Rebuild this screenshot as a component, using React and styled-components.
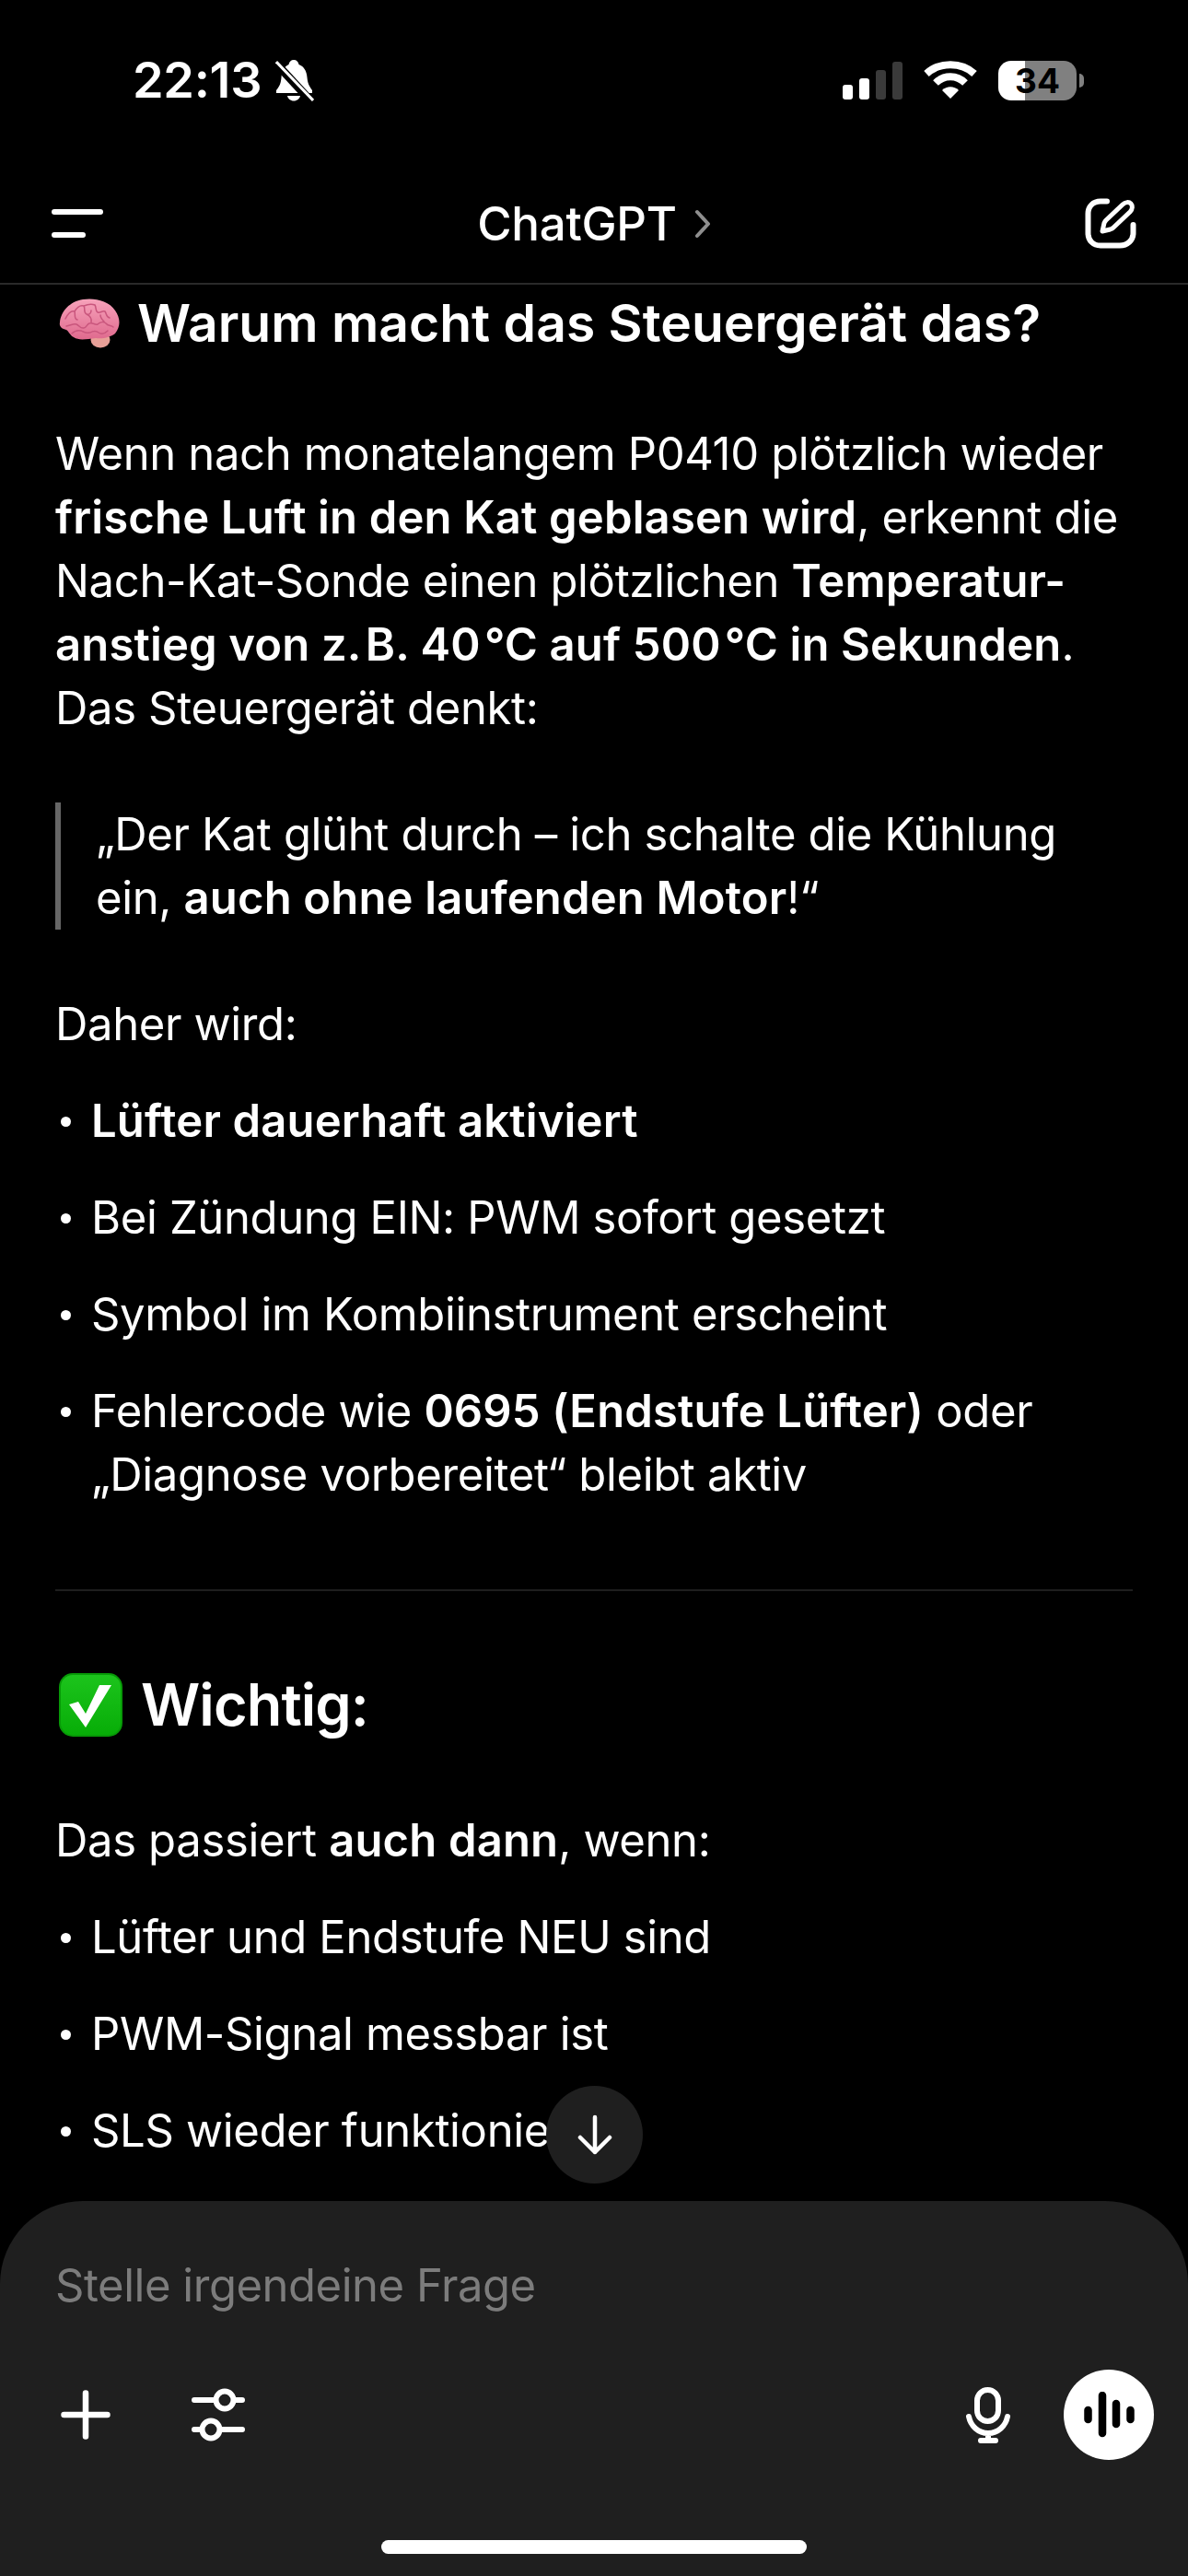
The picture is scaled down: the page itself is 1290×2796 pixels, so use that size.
import React from 'react';
import styled, {createGlobalStyle} from 'styled-components';

const GlobalStyle = createGlobalStyle`
  html, body {
    margin: 0;
    padding: 0;
    background: #000;
  }
  * {
    box-sizing: border-box;
  }
`;

const Screen = styled.div`
  position: relative;
  display: flex;
  flex-direction: column;
  width: 1290px;
  height: 2796px;
  overflow: hidden;
  background: #000;
  color: #fff;
  font-family: Inter, "Liberation Sans", sans-serif;
`;

const StatusBar = styled.div`
  display: flex;
  flex: none;
  justify-content: space-between;
  height: 178px;
  padding: 62px 113px 0 144px;
`;

const StatusLeft = styled.div`
  display: flex;
  align-items: center;
  gap: 15px;
  height: 50px;
`;

const Clock = styled.span`
  font-size: 54px;
  font-weight: 600;
  letter-spacing: -0.3px;
  line-height: 50px;
`;

const StatusRight = styled.div`
  display: flex;
  align-items: center;
  height: 50px;
`;

const Signal = styled.div`
  display: flex;
  align-items: flex-end;
  gap: 7px;
  height: 41px;
  margin-right: 23px;
`;

const SignalBar = styled.div`
  width: 11px;
  height: ${p => p.$h}px;
  border-radius: 3px;
  background: ${p => (p.$on ? '#fff' : '#3a3a3a')};
`;

const Battery = styled.div`
  display: flex;
  align-items: center;
  justify-content: center;
  width: 85px;
  height: 43px;
  margin-left: 23px;
  border-radius: 14px;
  background: linear-gradient(to right, #fff 0, #fff 29px, #808080 29px, #808080 100%);
  color: #000;
  font-size: 37px;
  font-weight: 700;
  line-height: 43px;
`;

const BatteryNub = styled.div`
  width: 5px;
  height: 15px;
  margin-left: 3px;
  border-radius: 0 5px 5px 0;
  background: #808080;
`;

const NavBar = styled.div`
  display: flex;
  flex: none;
  align-items: center;
  justify-content: space-between;
  height: 131px;
  padding: 0 56px 0 56px;
  border-bottom: 2px solid #2a2a2a;
`;

const MenuIcon = styled.div`
  display: flex;
  flex-direction: column;
  gap: 19px;
  width: 56px;
`;

const MenuLine = styled.div`
  width: ${p => p.$w}px;
  height: 6px;
  border-radius: 3px;
  background: #fff;
`;

const NavTitle = styled.div`
  display: flex;
  align-items: center;
  gap: 19px;
  font-size: 51px;
  font-weight: 500;
  letter-spacing: -0.3px;
`;

const Main = styled.div`
  flex: 1;
  min-height: 0;
  overflow: hidden;
  padding: 0 60px;
`;

const Heading = styled.div`
  display: flex;
  align-items: center;
  gap: ${p => p.$gap}px;
  height: 70px;
  margin-top: ${p => p.$top}px;
  padding-left: 4px;
  font-size: ${p => p.$size}px;
  font-weight: 600;
  letter-spacing: ${p => p.$ls}px;
  line-height: 70px;
  white-space: nowrap;
`;

const Para = styled.div`
  font-size: 49px;
  line-height: 69px;
  font-weight: 400;
  letter-spacing: -0.35px;
  white-space: nowrap;
  margin-top: ${p => p.$top}px;
  b {
    font-weight: 600;
    letter-spacing: 0.15px;
  }
`;

const Quote = styled(Para)`
  padding-left: 38px;
  border-left: 6px solid #666;
  margin-top: 68px;
`;

const List = styled.div`
  display: flex;
  flex-direction: column;
  gap: 36px;
  margin-top: 36px;
`;

const Item = styled(Para)`
  position: relative;
  padding-left: 39px;
  &::before {
    content: '';
    position: absolute;
    left: 6px;
    top: 30px;
    width: 11px;
    height: 11px;
    border-radius: 50%;
    background: #fff;
  }
`;

const Rule = styled.div`
  height: 2px;
  margin-top: 90px;
  background: #1e1e1e;
`;

const ScrollButton = styled.div`
  position: absolute;
  left: 593px;
  top: 2264px;
  display: flex;
  align-items: center;
  justify-content: center;
  width: 105px;
  height: 106px;
  border-radius: 50%;
  background: #1f1f1f;
`;

const Composer = styled.div`
  display: flex;
  flex: none;
  flex-direction: column;
  height: 407px;
  border-radius: 90px 90px 0 0;
  background: #1f1f1f;
`;

const Placeholder = styled.div`
  height: 69px;
  margin-top: 57px;
  padding-left: 60px;
  color: #7c7c7c;
  font-size: 49px;
  letter-spacing: -0.47px;
  line-height: 69px;
`;

const Toolbar = styled.div`
  display: flex;
  align-items: center;
  justify-content: space-between;
  height: 98px;
  margin-top: 57px;
  padding: 0 37px 0 66px;
`;

const ToolGroup = styled.div`
  display: flex;
  align-items: center;
  gap: ${p => p.$gap}px;
`;

const VoiceButton = styled.div`
  display: flex;
  align-items: center;
  justify-content: center;
  width: 98px;
  height: 98px;
  border-radius: 50%;
  background: #fff;
`;

const HomeIndicator = styled.div`
  align-self: center;
  width: 462px;
  height: 15px;
  margin-top: 87px;
  border-radius: 8px;
  background: #fff;
`;

const BellOff = () => (
  <svg width="42" height="46" viewBox="0 0 42 46">
    <path d="M20 1c3 0 5 2 5.500 5C31 8 34 13 34.500 20c.5 6 2 9 5.500 14v3H1v-3c4-5 5-8 5.500-14C7 13 10 8 14.500 6 15 3 17 1 20 1z" fill="#fff" />
    <path d="M13 40h14c-.5 3-3.500 5.500-7 5.500S13.500 43 13 40z" fill="#fff" />
    <path d="M2 6l36 39" stroke="#000" strokeWidth="9" />
    <path d="M1 3l40 42" stroke="#fff" strokeWidth="3" />
  </svg>
);

const Wifi = () => (
  <svg width="58" height="42" viewBox="0 0 58 42">
    <path d="M3 14C17 1 41 1 55 14" fill="none" stroke="#fff" strokeWidth="8" />
    <path d="M13 24C22 15 36 15 45 24" fill="none" stroke="#fff" strokeWidth="8" />
    <path d="M20 32C25 27 33 27 38 32L29 41z" fill="#fff" />
  </svg>
);

const Compose = () => (
  <svg width="56" height="55" viewBox="0 0 56 55" fill="none" stroke="#fff" strokeWidth="6" strokeLinecap="round" strokeLinejoin="round">
    <path d="M24 3.500H17C9 3.500 3.500 9 3.500 17v21C3.500 46 9 51.500 17 51.500h21c8 0 14.500-5.500 14.500-13.500v-9" />
    <path d="M41 7c3-3 7-3 9-1s2 6-1 9L31 32c-1 1-2 1.500-3.500 2L19 36l2-9c.5-1 1-2 2-3L41 7z" strokeWidth="5" />
  </svg>
);

const Chevron = () => (
  <svg width="18" height="32" viewBox="0 0 18 32" fill="none" stroke="#8e8e8e" strokeWidth="4" strokeLinecap="round" strokeLinejoin="round">
    <path d="M3 3l12 13L3 29" />
  </svg>
);

const Brain = () => (
  <svg width="66" height="54" viewBox="0 0 66 54">
    <defs>
      <linearGradient id="brainFill" x1="0" y1="0" x2="0" y2="1">
        <stop offset="0" stopColor="#f7a3bb" />
        <stop offset="1" stopColor="#df6a8e" />
      </linearGradient>
    </defs>
    <ellipse cx="45" cy="45" rx="10.500" ry="8.500" fill="#e8a098" />
    <path d="M1 26C2 14 12 3 26 1c12-2 28 1 35 12 6 9 6 17 0 25-5 4-13 6-21 5-10 1-18 3-24-1-4-2-5-6-8-8-5-1-8-4-7-8z" fill="url(#brainFill)" />
    <path d="M7 22c3-6 7-9 10-8 1 4-1 8 3 9M17 14c3-5 7-7 10-6 2 3-1 7 3 9 3 1 5-1 5-4M27 8c5-2 9-2 12-1M39 7c2 3 0 6 3 8 3 1 5-2 8-1M50 14c2 3 1 6 5 7M8 30c5-1 8-3 11-2 3 1 4 5 8 4 3 0 3-4 6-5 4-1 6 2 9 1M42 28c3-3 7-3 9-1 2 3 6 2 8 4M14 38c3-3 6-4 10-3 3 1 5 3 9 2M34 37c3-2 7-2 9 0 3 2 7 1 10-2M30 17c4 2 6 5 5 9M45 18c0 3 2 5 4 7" fill="none" stroke="#c9567d" strokeWidth="1.500" strokeLinecap="round" />
  </svg>
);

const CheckBox = () => (
  <svg width="69" height="69" viewBox="0 0 69 69">
    <defs>
      <linearGradient id="checkFill" x1="0" y1="0" x2="0" y2="1">
        <stop offset="0" stopColor="#1cc41c" />
        <stop offset="1" stopColor="#07ad07" />
      </linearGradient>
    </defs>
    <rect x="0" y="0" width="69" height="69" rx="15" fill="#079a07" />
    <rect x="2" y="2" width="65" height="65" rx="13" fill="url(#checkFill)" />
    <path d="M11 34l10-3 8 13L44 13h13L29 59z" fill="#fff" />
  </svg>
);

const ArrowDown = () => (
  <svg width="40" height="44" viewBox="0 0 40 44" fill="none" stroke="#fff" strokeWidth="4.500" strokeLinecap="round" strokeLinejoin="round">
    <path d="M20 3v38M4 25l16 16 16-16" />
  </svg>
);

const Plus = () => (
  <svg width="54" height="54" viewBox="0 0 54 54" fill="none" stroke="#fff" strokeWidth="6.500" strokeLinecap="round">
    <path d="M27 3.500v47M3.500 27h47" />
  </svg>
);

const Sliders = () => (
  <svg width="58" height="58" viewBox="0 0 58 58" fill="none" stroke="#fff" strokeWidth="6" strokeLinecap="round">
    <path d="M3 13h23M46 13h9M3 45h8M31 45h24" />
    <circle cx="36" cy="13" r="9.500" />
    <circle cx="21" cy="45" r="9.500" />
  </svg>
);

const Mic = () => (
  <svg width="50" height="61" viewBox="0 0 50 61" fill="none" stroke="#fff" strokeWidth="6" strokeLinecap="round">
    <rect x="13" y="3" width="23" height="34" rx="11.500" />
    <path d="M4 32c2 10 10 18 21 18s19-8 21-18M25 50v8M17 58h16" />
  </svg>
);

const Waveform = () => (
  <svg width="56" height="50" viewBox="0 0 56 50" fill="none" stroke="#000" strokeWidth="8.500" strokeLinecap="round">
    <path d="M5.500 20v10M21 4v41M36 13v22M51.500 20v10" />
  </svg>
);

const App = () => {
  return (
    <Screen>
      <GlobalStyle />
      <StatusBar>
        <StatusLeft>
          <Clock>22:13</Clock>
          <BellOff />
        </StatusLeft>
        <StatusRight>
          <Signal>
            <SignalBar $h={16} $on />
            <SignalBar $h={23} $on />
            <SignalBar $h={32} />
            <SignalBar $h={41} />
          </Signal>
          <Wifi />
          <Battery>34</Battery>
          <BatteryNub />
        </StatusRight>
      </StatusBar>
      <NavBar>
        <MenuIcon>
          <MenuLine $w={56} />
          <MenuLine $w={37} />
        </MenuIcon>
        <NavTitle>
          ChatGPT
          <Chevron />
        </NavTitle>
        <Compose />
      </NavBar>
      <Main>
        <Heading $size={57} $ls={0} $gap={19} $top={7}>
          <Brain />
          Warum macht das Steuergerät das?
        </Heading>
        <Para $top={72}>
          Wenn nach monatelangem P0410 plötzlich wieder<br />
          <b>frische Luft in den Kat geblasen wird</b>, erkennt die<br />
          Nach-Kat-Sonde einen plötzlichen <b>Temperatur-</b><br />
          <b>anstieg von z.{'\u200a'}B. 40{'\u200a'}°C auf 500{'\u200a'}°C in Sekunden</b>.<br />
          Das Steuergerät denkt:
        </Para>
        <Quote>
          „Der Kat glüht durch – ich schalte die Kühlung<br />
          ein, <b>auch ohne laufenden Motor</b>!“
        </Quote>
        <Para $top={68}>Daher wird:</Para>
        <List>
          <Item><b>Lüfter dauerhaft aktiviert</b></Item>
          <Item>Bei Zündung EIN: PWM sofort gesetzt</Item>
          <Item>Symbol im Kombiinstrument erscheint</Item>
          <Item>
            Fehlercode wie <b>0695 (Endstufe Lüfter)</b> oder<br />
            „Diagnose vorbereitet“ bleibt aktiv
          </Item>
        </List>
        <Rule />
        <Heading $size={63} $ls={-0.9} $gap={20} $top={88}>
          <CheckBox />
          Wichtig:
        </Heading>
        <Para $top={78}>Das passiert <b>auch dann</b>, wenn:</Para>
        <List>
          <Item>Lüfter und Endstufe NEU sind</Item>
          <Item>PWM-Signal messbar ist</Item>
          <Item>SLS wieder funktioniert</Item>
        </List>
      </Main>
      <ScrollButton>
        <ArrowDown />
      </ScrollButton>
      <Composer>
        <Placeholder>Stelle irgendeine Frage</Placeholder>
        <Toolbar>
          <ToolGroup $gap={88}>
            <Plus />
            <Sliders />
          </ToolGroup>
          <ToolGroup $gap={57}>
            <Mic />
            <VoiceButton>
              <Waveform />
            </VoiceButton>
          </ToolGroup>
        </Toolbar>
        <HomeIndicator />
      </Composer>
    </Screen>
  );
};

export default App;
